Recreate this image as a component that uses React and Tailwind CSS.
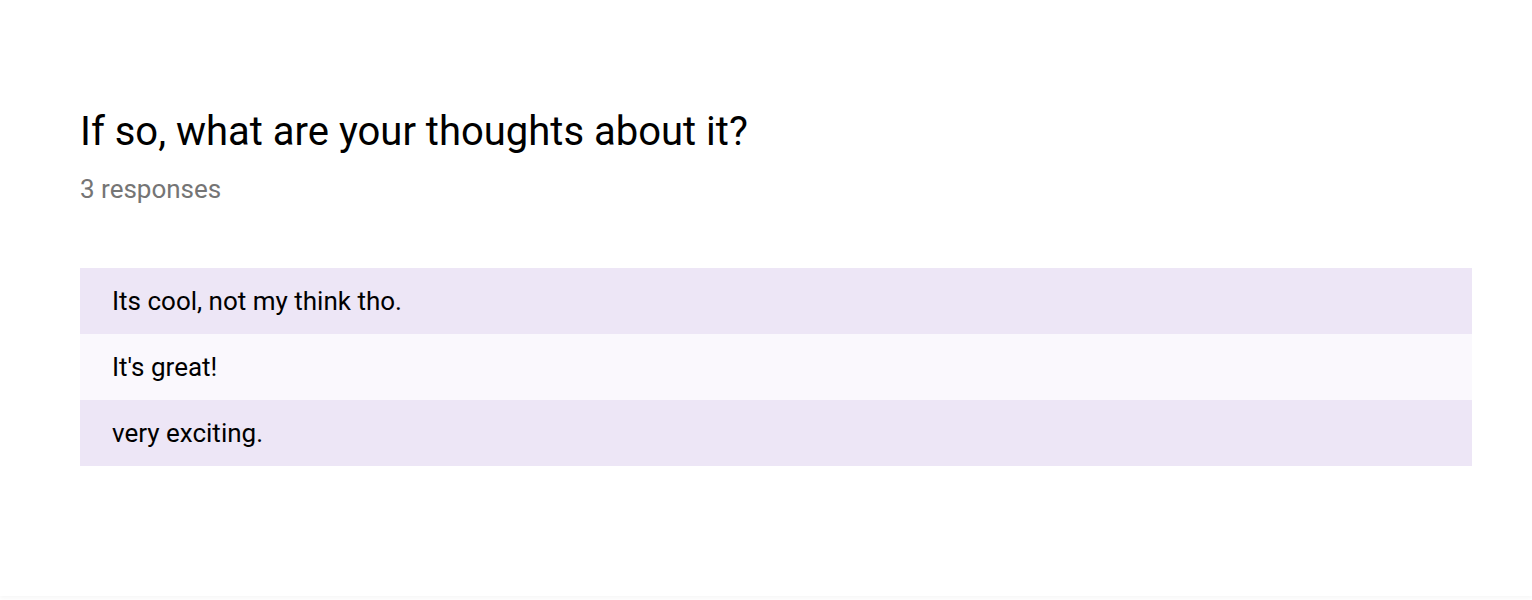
const responses = ["Its cool, not my think tho.", "It's great!", "very exciting."];

export default function App() {
  return (
    <div className="h-[600px] w-full bg-white font-['Roboto',sans-serif] text-black">
      <div className="h-[596px] bg-white pl-20 pr-[60px] pt-[106px] shadow-[0_2px_4px_rgba(0,0,0,0.04)]">
        <h2 className="text-[40px] leading-[52px]">If so, what are your thoughts about it?</h2>
        <p className="mt-[15px] text-[26px] leading-[32px] text-[#757575]">3 responses</p>
        <div className="mt-[63px]">
          {responses.map((text, i) => (
            <div
              key={text}
              className={`flex h-[66px] items-center px-8 text-[26px] ${i % 2 === 0 ? "bg-[#ede6f6]" : "bg-[#faf8fd]"}`}
            >
              {text}
            </div>
          ))}
        </div>
      </div>
    </div>
  );
}
